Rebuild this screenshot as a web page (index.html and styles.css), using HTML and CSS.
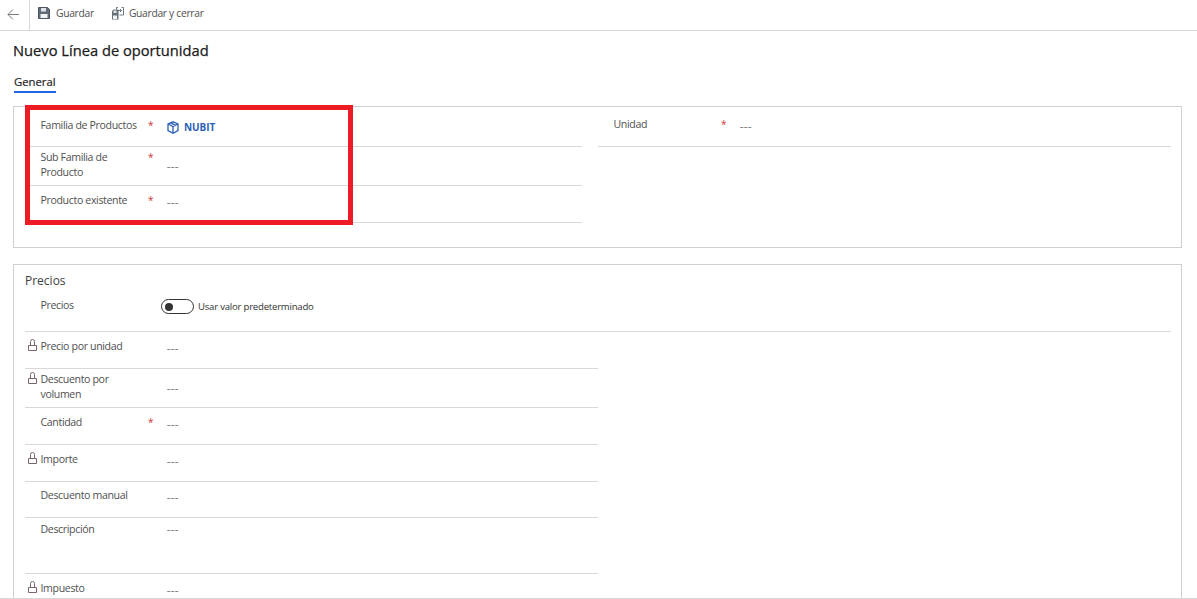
FILE: index.html
```html
<!DOCTYPE html>
<html lang="es">
<head>
<meta charset="utf-8">
<title>Nuevo Línea de oportunidad</title>
<link rel="stylesheet" href="styles.css">
</head>
<body>
<div class="page">
  <header class="toolbar">
    <button class="back" aria-label="Atrás">
      <svg width="12" height="11" viewBox="0 0 12 11"><path d="M12 5.500H1M5.800 .7L1 5.500l4.800 4.800" fill="none" stroke="#7a7a7a" stroke-width="1"/></svg>
    </button>
    <button class="tool">
      <svg width="12" height="12" viewBox="0 0 12 12"><path d="M0.500 0.500h9l2 2v9h-11z" fill="#5f6b78" stroke="#4d5560"/><rect x="3" y="1" width="5" height="3.500" fill="#dfe3e8"/><rect x="2.500" y="7" width="7" height="4" fill="#f2f2f2"/></svg>
      <span>Guardar</span>
    </button>
    <button class="tool tool-close">
      <svg width="13" height="13" viewBox="0 0 13 13"><path d="M1 4l1.500-1.500h5v10h-6.500z" fill="#66707b"/><rect x="2.500" y="3.500" width="3" height="2.500" fill="#e4e7ea"/><rect x="2" y="8.500" width="4" height="3.500" fill="#f2f2f2"/><path d="M5.500 2.500V.5h1.500M10.500.5h2V8h-4M6.500 3.500h4M9 2l1.500 1.500L9 5" fill="none" stroke="#5f6b78" stroke-width=".9"/></svg>
      <span>Guardar y cerrar</span>
    </button>
  </header>

  <main class="content">
    <h1 class="title">Nuevo Línea de oportunidad</h1>
    <nav class="tabs"><span class="tab">General</span></nav>

    <section class="card card-general">
      <div class="col col-left">
        <div class="row h40">
          <span class="label">Familia de Productos</span><span class="req">*</span>
          <a class="value link">
            <svg width="12" height="13" viewBox="0 0 12 13"><path d="M6 .8l5 2.200v6.500l-5 2.700-5-2.700V3zM1 3l5 2.500L11 3M6 5.500v6.700M3.500 1.900l5 2.400" fill="none" stroke="#2b5fb4" stroke-width="1.300"/></svg>
            NUBIT
          </a>
        </div>
        <div class="row h39">
          <span class="label">Sub Familia de Producto</span><span class="req">*</span><span class="value">---</span>
        </div>
        <div class="row h37">
          <span class="label">Producto existente</span><span class="req">*</span><span class="value">---</span>
        </div>
      </div>
      <div class="col col-right">
        <div class="row h40 tight">
          <span class="label">Unidad</span><span class="req">*</span><span class="value">---</span>
        </div>
      </div>
      <div class="highlight"></div>
    </section>

    <section class="card card-prices">
      <h2 class="card-title">Precios</h2>
      <div class="row toggle-row">
        <span class="label">Precios</span>
        <span class="toggle"><i></i></span>
        <span class="toggle-text">Usar valor predeterminado</span>
      </div>
      <div class="col col-prices">
        <div class="row h37"><svg class="lock" viewBox="0 0 9 12"><path d="M.5 6.500h8v5h-8zM2.500 6.500V2.500a2 2 0 0 1 4 0v4" fill="none" stroke="#7d6570"/></svg><span class="label">Precio por unidad</span><span class="req"></span><span class="value">---</span></div>
        <div class="row h39"><svg class="lock" viewBox="0 0 9 12"><path d="M.5 6.500h8v5h-8zM2.500 6.500V2.500a2 2 0 0 1 4 0v4" fill="none" stroke="#7d6570"/></svg><span class="label">Descuento por volumen</span><span class="req"></span><span class="value">---</span></div>
        <div class="row h37"><span class="label">Cantidad</span><span class="req">*</span><span class="value">---</span></div>
        <div class="row h37"><svg class="lock" viewBox="0 0 9 12"><path d="M.5 6.500h8v5h-8zM2.500 6.500V2.500a2 2 0 0 1 4 0v4" fill="none" stroke="#7d6570"/></svg><span class="label">Importe</span><span class="req"></span><span class="value">---</span></div>
        <div class="row h36 manual"><span class="label">Descuento manual</span><span class="req"></span><span class="value">---</span></div>
        <div class="row h56"><span class="label">Descripción</span><span class="req"></span><span class="value">---</span></div>
        <div class="row h37 last"><svg class="lock" viewBox="0 0 9 12"><path d="M.5 6.500h8v5h-8zM2.500 6.500V2.500a2 2 0 0 1 4 0v4" fill="none" stroke="#7d6570"/></svg><span class="label">Impuesto</span><span class="req"></span><span class="value">---</span></div>
      </div>
    </section>
  </main>
  <div class="footer-line"></div>
</div>
</body>
</html>
```

FILE: styles.css
```css
* { box-sizing: border-box; }
html, body { margin: 0; padding: 0; height: 100%; overflow: hidden; background: #fff; }
body { font-family: "Open Sans", "Noto Sans", sans-serif; font-size: 10.600px; letter-spacing: -.36px; color: #505050; }
.page { height: 599px; display: flex; flex-direction: column; overflow: hidden; }

.toolbar { height: 31px; flex: none; display: flex; align-items: stretch; border-bottom: 1px solid #d8d8d8; }
button { font: inherit; letter-spacing: inherit; color: inherit; background: none; border: 0; padding: 0; }
.back { width: 30px; border-right: 1px solid #d8d8d8; display: flex; align-items: center; justify-content: center; padding: 0 3px 2px 0; }
.tool { display: flex; align-items: center; gap: 6px; margin-left: 8px; margin-right: 8px; padding-bottom: 4px; font-size: 10.300px; letter-spacing: -.3px; color: #4f4f4f; }
.tool-close { margin-left: 9px; gap: 5px; }

.content { flex: 1; min-height: 0; overflow: hidden; padding: 0 15px 0 13px; }
.title { margin: 10px 0 0 0; font-size: 14.700px; line-height: 19px; letter-spacing: 0; font-weight: 400; color: #1a1a1a; -webkit-text-stroke: 0.25px #1a1a1a; }
.tabs { margin: 15px 0 0 1px; height: 31px; }
.tab { display: inline-block; height: 18px; line-height: 14px; color: #262626; font-size: 11.300px; letter-spacing: 0; border-bottom: 2px solid #2266e3; -webkit-text-stroke: 0.2px #262626; }

.card { border: 1px solid #d0d0d0; position: relative; }
.card-general { height: 142px; display: flex; gap: 16px; padding: 0 10px 0 11px; }
.card-prices { margin-top: 16px; height: 340px; padding: 0 10px 0 11px; }
.col-left { width: 557px; }
.col-right { width: 573px; }
.col-prices { width: 573px; }

.row { display: flex; align-items: flex-start; border-bottom: 1px solid #d8d8d8; position: relative; padding-left: 15.500px; }
.h36 { height: 36px; } .h37 { height: 37px; } .h39 { height: 39px; } .h40 { height: 40px; } .h56 { height: 56px; }
.last { border-bottom: 0; }
.label { width: 107.500px; line-height: 15px; padding-top: 7px; color: #505050; flex: none; }
.req { width: 19px; flex: none; color: #d13438; padding-top: 7px; line-height: 15px; font-size: 10px; }
.value { padding-top: 9px; line-height: 15px; color: #808080; letter-spacing: .55px; -webkit-text-stroke: .25px #808080; }

.col-left .h40 .label, .col-left .h40 .req { padding-top: 11px; }
.col-left .h39 .label, .col-left .h39 .req { padding-top: 3px; }
.col-left .h39 .value { padding-top: 12px; }
.col-left .h37 .label, .col-left .h37 .req { padding-top: 7px; }
.col-left .h37 .value { padding-top: 9px; }
.col-left .link { display: flex; align-items: center; gap: 5px; color: #2b5fb4; font-weight: 700; letter-spacing: -.05px; padding-top: 13px; font-size: 10px; -webkit-text-stroke: 0; }
.tight .label, .tight .req { padding-top: 10px; }
.tight .value { padding-top: 12px; }

.highlight { position: absolute; left: 11px; top: -2px; width: 328px; height: 120px; border: 5px solid #ed1c24; }

.card-title { margin: 0; padding-top: 7px; height: 27px; font-size: 12px; letter-spacing: 0; line-height: 17px; font-weight: 400; color: #404040; }
.toggle-row { height: 40px; width: 100%; }
.toggle-row .label { padding-top: 6px; line-height: 14px; width: 120.500px; }
.toggle { width: 33px; height: 15px; border: 1px solid #333; border-radius: 8px; margin-top: 7px; display: block; position: relative; flex: none; }
.toggle i { position: absolute; left: 3px; top: 2.500px; width: 8px; height: 8px; border-radius: 50%; background: #333; }
.toggle-text { margin: 7px 0 0 4px; font-size: 9.600px; letter-spacing: -.23px; line-height: 16px; color: #333; }
.lock { position: absolute; left: 3px; top: 7px; width: 9px; height: 12px; }
.col-prices .h39 .lock { top: 3px; }
.col-prices .h39 .label { padding-top: 3px; }
.col-prices .h39 .value { padding-top: 12px; }
.col-prices .h36 .label { padding-top: 6px; }
.col-prices .h36 .value { padding-top: 8px; }
.col-prices .h56 .label { padding-top: 4px; }
.col-prices .h56 .value { padding-top: 4px; }
.footer-line { height: 1px; background: #d8d8d8; flex: none; margin-top: -1px; position: relative; }
```
